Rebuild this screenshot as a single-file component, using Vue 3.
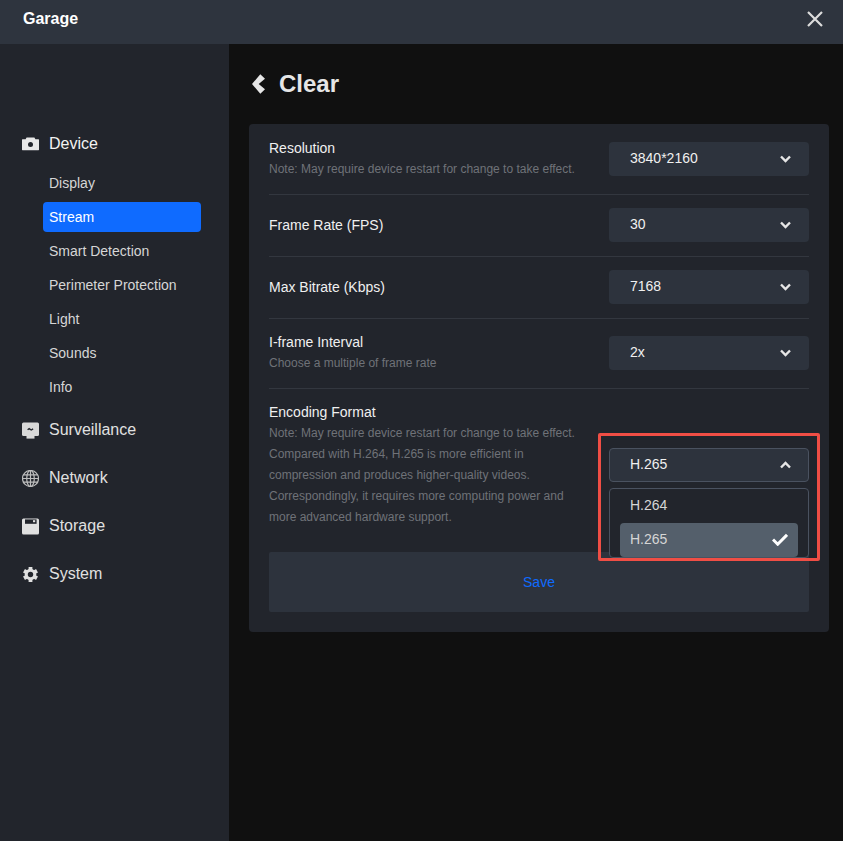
<template>
  <div class="page">
    <header class="topbar">
      <span class="device-name">Garage</span>
      <svg class="close" width="16" height="16" viewBox="0 0 16 16"><path d="M1 1l14 14M15 1L1 15" stroke="#dcdcdc" stroke-width="2.2" fill="none" /></svg>
    </header>

    <div class="body">
      <aside class="side">
        <template v-for="g in groups" :key="g.name">
          <div class="group">
            <svg class="group-icon" width="17" height="17" viewBox="0 0 17 17">
              <template v-if="g.icon === 'camera'">
                <path d="M4.6 2.5h7.8l1 1.8h3.1c.3 0 .5.2.5.5v10c0 .3-.2.5-.5.5H.5c-.3 0-.5-.2-.5-.5v-10c0-.3.2-.5.5-.5h3.1z" fill="#e8e8e8" />
                <circle cx="8.5" cy="9.6" r="2.5" fill="#22252c" />
              </template>
              <template v-else-if="g.icon === 'monitor'">
                <rect x="0" y="0.5" width="17" height="13.5" rx="1.5" fill="#d8d8d8" />
                <rect x="4.5" y="14" width="8" height="2.6" fill="#d8d8d8" />
                <path d="M5.6 7.8l1.6-1.2 2 1.4 1.9-1.2" stroke="#22252c" stroke-width="1.4" fill="none" />
              </template>
              <template v-else-if="g.icon === 'globe'">
                <circle cx="8.5" cy="8.5" r="8" fill="none" stroke="#bdbdbd" stroke-width="1.2" />
                <ellipse cx="8.5" cy="8.5" rx="3.8" ry="8" fill="none" stroke="#bdbdbd" stroke-width="1.2" />
                <path d="M8.5.5v16M1.4 4.9h14.2M.5 8.5h16M1.4 12.1h14.2" stroke="#bdbdbd" stroke-width="1.2" fill="none" />
              </template>
              <template v-else-if="g.icon === 'storage'">
                <rect x="0" y="0.5" width="17" height="16" rx="1.5" fill="#e0e0e0" />
                <rect x="3" y="1.4" width="11.6" height="4.4" fill="#22252c" />
                <rect x="11" y="2.2" width="2.2" height="2" fill="#e0e0e0" />
              </template>
              <template v-else>
                <path d="M8.5 1v15M2 4.75l13 7.5M2 12.25l13-7.5" stroke="#e0e0e0" stroke-width="3.8" fill="none" />
                <circle cx="8.5" cy="8.5" r="5.8" fill="#e0e0e0" />
                <circle cx="8.5" cy="8.5" r="2.7" fill="#22252c" />
              </template>
            </svg>
            <span>{{ g.name }}</span>
          </div>
          <div v-if="g.items" class="sub-list">
            <div v-for="s in g.items" :key="s" class="sub" :class="{ active: s === 'Stream' }">{{ s }}</div>
          </div>
        </template>
      </aside>

      <main class="main">
        <div class="title-row">
          <svg width="16" height="20" viewBox="0 0 16 20"><path d="M1 10L9.3.3 14 4.7 7.7 10l6.3 5.3-4.7 4.4z" fill="#e6e6e6" /></svg>
          <h1>Clear</h1>
        </div>

        <section class="card">
          <div class="row first">
            <div class="info">
              <div class="label">Resolution</div>
              <div class="note">Note: May require device restart for change to take effect.</div>
            </div>
            <div class="select">
              <span>3840*2160</span>
              <svg width="11" height="8" viewBox="0 0 11 8"><path d="M1 1.5l4.5 4.5L10 1.5" stroke="#e6e6e6" stroke-width="2.4" fill="none" /></svg>
            </div>
          </div>
          <div class="row">
            <div class="info"><div class="label">Frame Rate (FPS)</div></div>
            <div class="select">
              <span>30</span>
              <svg width="11" height="8" viewBox="0 0 11 8"><path d="M1 1.5l4.5 4.5L10 1.5" stroke="#e6e6e6" stroke-width="2.4" fill="none" /></svg>
            </div>
          </div>
          <div class="row">
            <div class="info"><div class="label">Max Bitrate (Kbps)</div></div>
            <div class="select">
              <span>7168</span>
              <svg width="11" height="8" viewBox="0 0 11 8"><path d="M1 1.5l4.5 4.5L10 1.5" stroke="#e6e6e6" stroke-width="2.4" fill="none" /></svg>
            </div>
          </div>
          <div class="row tall">
            <div class="info">
              <div class="label">I-frame Interval</div>
              <div class="note">Choose a multiple of frame rate</div>
            </div>
            <div class="select">
              <span>2x</span>
              <svg width="11" height="8" viewBox="0 0 11 8"><path d="M1 1.5l4.5 4.5L10 1.5" stroke="#e6e6e6" stroke-width="2.4" fill="none" /></svg>
            </div>
          </div>
          <div class="row last">
            <div class="info wrap">
              <div class="label">Encoding Format</div>
              <div class="note">Note: May require device restart for change to take effect. Compared with H.264, H.265 is more efficient in compression and produces higher-quality videos. Correspondingly, it requires more computing power and more advanced hardware support.</div>
            </div>
            <div class="select-wrap">
              <div class="select open">
                <span>H.265</span>
                <svg width="11" height="8" viewBox="0 0 11 8"><path d="M1 6.5L5.5 2 10 6.5" stroke="#e6e6e6" stroke-width="2.4" fill="none" /></svg>
              </div>
              <div class="menu">
                <div class="option">H.264</div>
                <div class="option picked">
                  <span>H.265</span>
                  <svg width="16" height="13" viewBox="0 0 16 13"><path d="M1 6.5l4.7 4.7L15 1.8" stroke="#fff" stroke-width="3" fill="none" /></svg>
                </div>
              </div>
              <div class="highlight"></div>
            </div>
          </div>
          <button class="save" type="button">Save</button>
        </section>
      </main>
    </div>
  </div>
</template>

<script setup>
const groups = [
  { name: 'Device', icon: 'camera', items: ['Display', 'Stream', 'Smart Detection', 'Perimeter Protection', 'Light', 'Sounds', 'Info'] },
  { name: 'Surveillance', icon: 'monitor' },
  { name: 'Network', icon: 'globe' },
  { name: 'Storage', icon: 'storage' },
  { name: 'System', icon: 'gear' }
]
</script>

<style>
html, body { margin: 0; background: #101010; }
</style>

<style scoped>
.page { height: 100vh; display: flex; flex-direction: column; font-family: "Liberation Sans", Arial, sans-serif; background: #101010; overflow: hidden; }
.topbar { height: 44px; flex: none; background: #2e343e; display: flex; align-items: center; justify-content: space-between; padding: 0 20px 0 23px; box-sizing: border-box; }
.device-name { font-size: 16px; font-weight: 700; color: #fff; position: relative; top: -3px; }
.close { position: relative; top: -3px; }
.body { flex: 1; display: flex; min-height: 0; }

.side { width: 229px; flex: none; background: #22252c; padding-top: 76px; box-sizing: border-box; }
.group { height: 48px; display: flex; align-items: center; gap: 10px; padding-left: 22px; font-size: 16px; color: #e0e0e0; }
.group:first-child { height: 47px; color: #f2f2f2; }
.group-icon { flex: none; }
.sub-list { display: flex; flex-direction: column; gap: 4px; padding: 1px 28px 4px 43px; }
.sub { height: 30px; line-height: 30px; padding-left: 6px; font-size: 14px; color: #d6d6d6; border-radius: 4px; }
.sub.active { background: #0f6bff; color: #fff; }

.main { flex: 1; padding: 20px 14px 0 20px; min-width: 0; }
.title-row { height: 40px; display: flex; align-items: center; gap: 12px; margin-bottom: 20px; }
.title-row svg { margin-left: 2px; }
h1 { margin: 0; font-size: 24px; font-weight: 700; color: #e6e6e6; }

.card { background: #22252c; border-radius: 4px; padding: 0 20px 20px; }
.row { display: flex; align-items: center; justify-content: space-between; padding: 13px 0 14px; border-bottom: 1px solid #33373f; }
.row.first { padding: 13px 0 14px; }
.row.tall { padding: 12px 0 14px; }
.row.last { border-bottom: none; padding: 12px 0 24px; }
.label { font-size: 14px; line-height: 22px; color: #f0f0f0; }
.note { font-size: 12px; line-height: 21px; color: #6f7278; }
.wrap { width: 320px; }

.select { width: 200px; height: 34px; box-sizing: border-box; background: #2d333d; border-radius: 4px; display: flex; align-items: center; justify-content: space-between; padding: 0 18px 0 21px; font-size: 14px; color: #f0f0f0; }
.select span { margin-top: -2px; }
.select.open { border: 1px solid #4a5260; padding: 0 17px 0 20px; }
.select-wrap { position: relative; }
.menu { position: absolute; left: 0; top: 40px; width: 200px; height: 70px; box-sizing: border-box; background: #22252c; border: 1px solid #4a5260; border-radius: 4px; padding: 0 10px; z-index: 2; overflow: hidden; }
.option { height: 34px; line-height: 33px; padding: 0 10px 0 10px; font-size: 14px; color: #d6d6d6; display: flex; align-items: center; justify-content: space-between; }
.option.picked { background: #545f6b; border-radius: 4px; }
.highlight { position: absolute; left: -11px; top: -15px; width: 222px; height: 128px; box-sizing: border-box; border: 3px solid #f04e45; border-radius: 2px; z-index: 3; pointer-events: none; }

.save { display: block; width: 100%; height: 60px; border: none; border-radius: 2px; background: #2d333d; color: #0f6bff; font: 14px "Liberation Sans", Arial, sans-serif; }
</style>
